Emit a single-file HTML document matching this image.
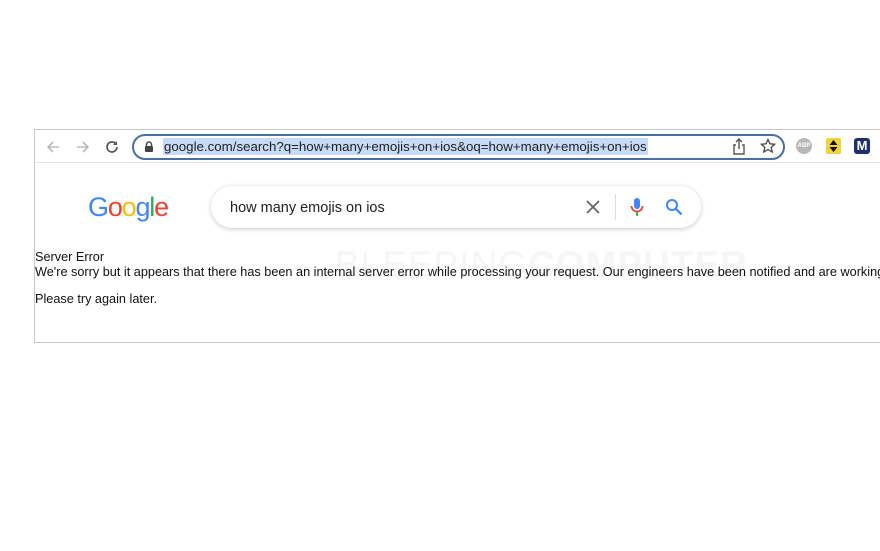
<!DOCTYPE html>
<html><head><meta charset="utf-8"><style>
*{margin:0;padding:0;box-sizing:border-box}
body{width:880px;height:551px;background:#fff;position:relative;overflow:hidden;font-family:"Liberation Sans",Arial,sans-serif}
.frame{position:absolute;left:34px;top:129px;width:846px;height:214px;border:1px solid #c8c8c8;border-right:none;overflow:hidden}
.bar{position:absolute;left:0;top:0;width:100%;height:33px;border-bottom:1px solid #e3e3e3;background:#fff}
.omni{position:absolute;left:97px;top:4px;width:653px;height:26px;border:2px solid #4a6fa5;border-radius:13px}
.url{position:absolute;left:128px;top:8px;font-size:13.3px;color:#202124;background:#c7dbf6;line-height:17px;padding:0 1px}
.abs{position:absolute}
.gsearch{position:absolute;left:176px;top:56px;width:490px;height:42px;border-radius:21px;box-shadow:0 1px 5px rgba(0,0,0,.22);background:#fff}
.txt{position:absolute;font-size:12.7px;color:#111;left:0}
</style></head><body>
<div class="frame">
 <div class="bar">
  <svg class="abs" style="left:10px;top:9px" width="16" height="16" viewBox="0 0 16 16"><path d="M14 8H3M8 3L3 8l5 5" stroke="#bbb" stroke-width="1.6" fill="none"/></svg>
  <svg class="abs" style="left:40px;top:9px" width="16" height="16" viewBox="0 0 16 16"><path d="M2 8h11M8 3l5 5-5 5" stroke="#bbb" stroke-width="1.6" fill="none"/></svg>
  <svg class="abs" style="left:69px;top:9px" width="16" height="16" viewBox="0 0 16 16"><path d="M13 8a5 5 0 1 1-1.5-3.6" stroke="#555" stroke-width="1.7" fill="none"/><path d="M13 2v4H9z" fill="#555"/></svg>
  <div class="omni"></div>
  <svg class="abs" style="left:109px;top:11px" width="10" height="12" viewBox="0 0 10 12"><path d="M2.5 5V3.5a2.5 2.5 0 0 1 5 0V5" stroke="#444" stroke-width="1.4" fill="none"/><rect x="1" y="5" width="8" height="6" rx="1" fill="#444"/></svg>
  <div class="url">google.com/search?q=how+many+emojis+on+ios&amp;oq=how+many+emojis+on+ios</div>
  <svg class="abs" style="left:697px;top:8px" width="14" height="17" viewBox="0 0 14 17"><path d="M7 1v10M4 4l3-3 3 3M4 7H2v9h10V7h-2" stroke="#555" stroke-width="1.4" fill="none"/></svg>
  <svg class="abs" style="left:725px;top:8px" width="16" height="16" viewBox="0 0 16 16"><path d="M8 1.5l2 4.3 4.6.5-3.4 3.1 1 4.6L8 11.6 3.8 14l1-4.6L1.4 6.3 6 5.8z" stroke="#444" stroke-width="1.3" fill="none"/></svg>
  <div class="abs" style="left:761px;top:8px;width:16px;height:16px;border-radius:50%;background:#b8b8b8;color:#fff;font-size:6px;font-weight:bold;line-height:16px;text-align:center">ABP</div>
  <div class="abs" style="left:791px;top:8px;width:15px;height:16px;background:#f0d23c;border-radius:2px"></div>
  <svg class="abs" style="left:792px;top:9px" width="13" height="14" viewBox="0 0 13 14"><path d="M6.5 1l4 5h-8zM6.5 13l4-5h-8z" fill="#111"/></svg>
  <div class="abs" style="left:819px;top:8px;width:16px;height:16px;background:#1d3170;border-radius:3px;color:#fff;font-size:13px;font-weight:bold;line-height:16px;text-align:center">M</div>
 </div>
 <div class="abs" style="left:53px;top:62px;font-size:27px;letter-spacing:-1.2px;font-family:'Liberation Sans',sans-serif"><span style="color:#4285f4">G</span><span style="color:#ea4335">o</span><span style="color:#fbbc05">o</span><span style="color:#4285f4">g</span><span style="color:#34a853">l</span><span style="color:#ea4335">e</span></div>
 <div class="gsearch">
  <div class="abs" style="left:19px;top:14px;font-size:14.5px;color:#202124">how many emojis on ios</div>
  <svg class="abs" style="left:375px;top:14px" width="14" height="14" viewBox="0 0 14 14"><path d="M1 1l12 12M13 1L1 13" stroke="#666" stroke-width="1.8"/></svg>
  <div class="abs" style="left:404px;top:8px;width:1px;height:26px;background:#ddd"></div>
  <svg class="abs" style="left:419px;top:11px" width="14" height="21" viewBox="0 0 14 21"><rect x="4" y="1" width="6" height="11" rx="3" fill="#4285f4"/><path d="M1.5 9a5.5 5.5 0 0 0 11 0" stroke="#ea4335" stroke-width="1.8" fill="none"/><path d="M7 15v4" stroke="#34a853" stroke-width="1.8"/></svg>
  <svg class="abs" style="left:454px;top:12px" width="18" height="18" viewBox="0 0 18 18"><circle cx="7" cy="7" r="5" stroke="#4285f4" stroke-width="2" fill="none"/><path d="M10.5 10.5l6 6" stroke="#4285f4" stroke-width="2.2"/></svg>
 </div>
 <div class="abs" style="left:300px;top:114px;font-size:37px;color:#f6f6f6;letter-spacing:1px;white-space:nowrap">BLEEPING<b>COMPUTER</b></div>
 <div class="txt" style="top:120px">Server Error</div>
 <div class="txt" style="top:135px;white-space:nowrap">We're sorry but it appears that there has been an internal server error while processing your request. Our engineers have been notified and are working to resolve the issue.</div>
 <div class="txt" style="top:162px">Please try again later.</div>
</div>
</body></html>
